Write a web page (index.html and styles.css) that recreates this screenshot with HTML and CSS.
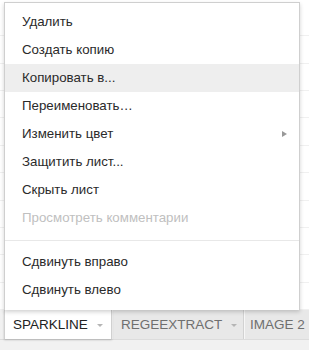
FILE: index.html
```html
<!DOCTYPE html>
<html>
<head>
<meta charset="utf-8">
<link rel="stylesheet" href="styles.css">
</head>
<body>
<div class="page">
  <div class="grid">
    <div class="gridline"></div>
    <div class="gridline"></div>
    <div class="gridline"></div>
    <div class="gridline"></div>
    <div class="gridline"></div>
    <div class="gridline"></div>
    <div class="gridline"></div>
    <div class="gridline"></div>
    <div class="gridline"></div>
    <div class="gridline"></div>
    <div class="gridline"></div>
  </div>
  <div class="tabbar">
    <div class="tab active">SPARKLINE<span class="caret"></span></div>
    <div class="tab wide">REGEEXTRACT<span class="caret"></span></div>
    <div class="tab last">IMAGE 2</div>
  </div>
  <div class="menu">
    <div class="item">Удалить</div>
    <div class="item">Создать копию</div>
    <div class="item hover">Копировать в...</div>
    <div class="item">Переименовать…</div>
    <div class="item sub">Изменить цвет<span class="arrow"></span></div>
    <div class="item">Защитить лист...</div>
    <div class="item">Скрыть лист</div>
    <div class="item disabled">Просмотреть комментарии</div>
    <div class="sep"></div>
    <div class="item">Сдвинуть вправо</div>
    <div class="item">Сдвинуть влево</div>
  </div>
</div>
</body>
</html>
```
FILE: styles.css
```css
html, body {
  margin: 0;
  padding: 0;
}
body {
  width: 309px;
  height: 350px;
  overflow: hidden;
  background: #f1f1f1;
  font-family: "Liberation Sans", Arial, sans-serif;
}
.page {
  position: relative;
  width: 309px;
  height: 350px;
}
.grid {
  height: 310px;
  background: #fff;
  display: flex;
  flex-direction: column;
  padding-top: 9px;
  box-sizing: border-box;
}
.gridline {
  height: 27px;
  border-bottom: 1px solid #f0f0f0;
}
.tabbar {
  display: flex;
  height: 29px;
  background: #f1f1f1;
  border-bottom: 1px solid #dcdcdc;
  padding-left: 4px;
}
.tab {
  display: flex;
  align-items: center;
  flex-shrink: 0;
  box-sizing: border-box;
  font-size: 13.5px;
  color: #6f6f6f;
  background: #e8e8e8;
  border-right: 1px solid #d2d2d2;
  border-left: 1px solid #f7f7f7;
  white-space: nowrap;
}
.tab.active {
  background: #fff;
  color: #222;
  width: 108px;
  padding-left: 8px;
  border-left: 1px solid #d0d0d0;
  border-right: 1px solid #d0d0d0;
  position: relative;
  z-index: 2;
  box-shadow: 0 1px 2px rgba(0,0,0,.2);
}
.tab.wide {
  width: 132px;
  padding-left: 8px;
}
.tab.last {
  padding-left: 5px;
  padding-right: 8px;
}
.caret {
  width: 0;
  height: 0;
  margin-left: 9px;
  margin-top: 1px;
  border-top: 3px solid #b5b5b5;
  border-left: 3px solid transparent;
  border-right: 3px solid transparent;
}
.menu {
  position: absolute;
  left: 4px;
  top: 2px;
  width: 296px;
  height: 308px;
  box-sizing: border-box;
  background: #fff;
  border: 1px solid #cfcfcf;
  border-bottom: none;
  box-shadow: 0 2px 4px rgba(0,0,0,.18);
  padding-top: 5px;
  z-index: 3;
}
.item {
  height: 28px;
  line-height: 28px;
  padding-left: 17px;
  font-size: 13.3px;
  color: #2a2a2a;
  position: relative;
}
.item.hover {
  background: #eeeeee;
}
.item.disabled {
  color: #c0c0c0;
}
.arrow {
  position: absolute;
  right: 12px;
  top: 11px;
  width: 0;
  height: 0;
  border-left: 5px solid #999;
  border-top: 3px solid transparent;
  border-bottom: 3px solid transparent;
}
.sep {
  height: 8px;
  border-bottom: 1px solid #e8e8e8;
  margin-bottom: 7px;
}
```
